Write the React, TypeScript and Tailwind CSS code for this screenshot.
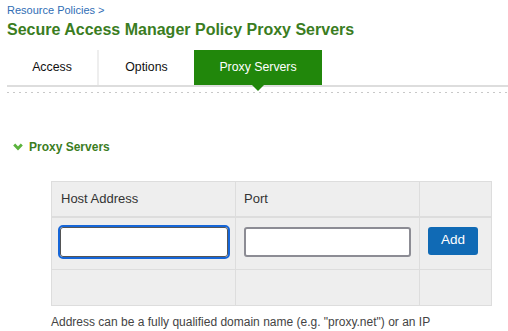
import React from "react";

export default function App() {
  return (
    <div className="w-[508px] h-[331px] overflow-hidden bg-white font-['Liberation_Sans',Arial,sans-serif]">
      {/* Breadcrumb + title */}
      <div className="pl-[7px] pt-[3px]">
        <div className="text-[11px] leading-[14px] text-[#2f6db5]">Resource Policies &gt;</div>
        <h1 className="mt-[3px] text-[16px] leading-[20px] font-bold text-[#3b7d1f]">
          Secure Access Manager Policy Proxy Servers
        </h1>
      </div>

      {/* Tabs */}
      <div className="ml-[7px] mt-[10px] flex h-[37px] border-b-2 border-[#dddddd]">
        <div className="flex w-[90px] items-center justify-center text-[12.3px] text-[#111]">Access</div>
        <div className="w-[2px] bg-[#eeeeee]" />
        <div className="flex w-[95px] items-center justify-center text-[12.3px] text-[#111]">Options</div>
        <div className="relative flex w-[128px] items-center justify-center bg-[#21870b] text-[12.3px] text-white">
          Proxy Servers
          <div className="absolute left-1/2 top-full -translate-x-1/2 h-0 w-0 border-x-[6px] border-t-[6px] border-x-transparent border-t-[#21870b]" />
        </div>
      </div>
      <div className="ml-[7px] mt-[5px] h-px bg-[linear-gradient(to_right,#c8c8c8_2px,transparent_2px)] bg-[length:6px_1px]" />

      {/* Section header */}
      <div className="mt-[45px] flex items-center pl-[13px] text-[12px] font-bold text-[#3b7d1f]">
        <svg width="10" height="8" viewBox="0 0 10 8" className="mr-[6px]">
          <path d="M1.2 1.5 L5 5.5 L8.8 1.5" fill="none" stroke="#5bb33d" strokeWidth="2.8" />
        </svg>
        Proxy Servers
      </div>

      {/* Table */}
      <div className="ml-[51px] mt-[25px] w-[441px]">
        <table className="w-full border-collapse bg-[#eeeeee] text-[13px] text-[#333]">
          <thead>
            <tr className="h-[35px] border-b-2 border-[#dddddd]">
              <th className="w-[184px] border border-[#dddddd] pl-[9px] text-left font-normal">Host Address</th>
              <th className="w-[184px] border border-[#dddddd] pl-[8px] text-left font-normal">Port</th>
              <th className="border border-[#dddddd]" />
            </tr>
          </thead>
          <tbody>
            <tr className="h-[53px]">
              <td className="border border-[#dddddd] pl-[8px] pt-[9px] align-top">
                <input className="block h-[30px] w-[168px] rounded-[3px] border border-[#555] bg-white outline-2 outline-[#1666d8]" />
              </td>
              <td className="border border-[#dddddd] pl-[8px] pt-[9px] align-top">
                <input className="block h-[30px] w-[167px] rounded-[3px] border-2 border-[#8c8c94] bg-white outline-none" />
              </td>
              <td className="border border-[#dddddd] pl-[8px] pt-[9px] align-top">
                <button className="h-[28px] w-[50px] rounded-[3px] bg-[#106ab5] text-[13.5px] text-white">Add</button>
              </td>
            </tr>
            <tr className="h-[36px]">
              <td className="border border-[#dddddd]" />
              <td className="border border-[#dddddd]" />
              <td className="border border-[#dddddd]" />
            </tr>
          </tbody>
        </table>
        <div className="mt-[9px] text-[12px] leading-[15px] text-[#444]">
          Address can be a fully qualified domain name (e.g. "proxy.net") or an IP
        </div>
      </div>
    </div>
  );
}
